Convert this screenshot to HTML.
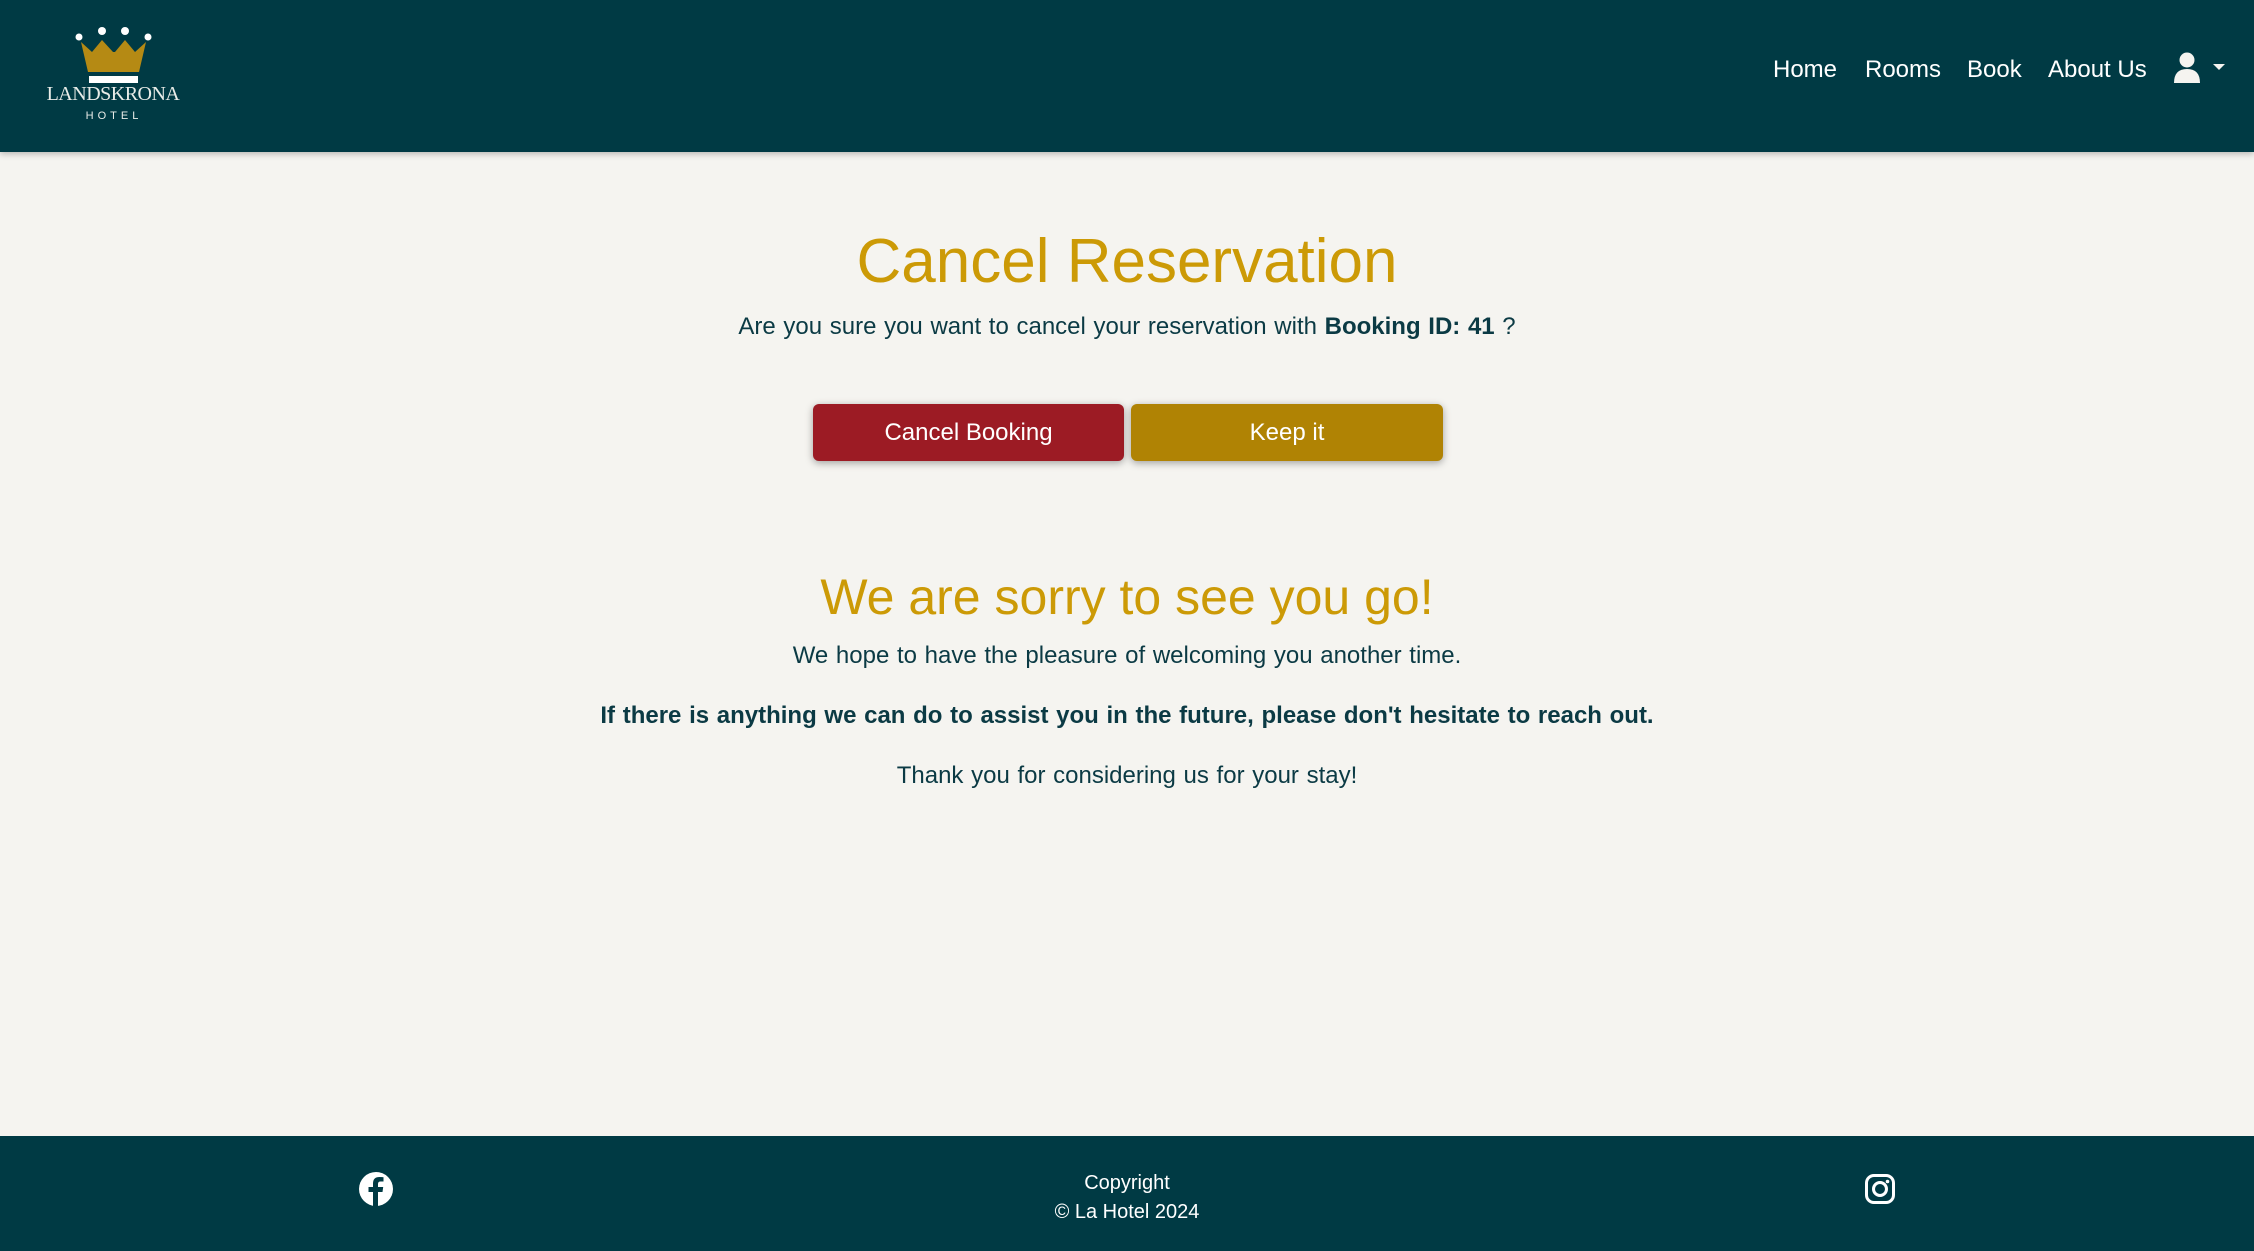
<!DOCTYPE html>
<html><head><meta charset="utf-8"><style>
*{margin:0;padding:0;box-sizing:border-box}
body{width:2254px;height:1251px;background:#f5f4f0;font-family:"Liberation Sans",sans-serif;position:relative;overflow:hidden;color:#0b3a44}
header{position:absolute;left:0;top:0;width:2254px;height:152px;background:#003a44;box-shadow:0 2px 6px rgba(0,0,0,.25)}
.nav{position:absolute;top:56px;font-size:24px;color:#fff}
.c{position:absolute;left:0;width:2254px;text-align:center}
.btn{position:absolute;top:404px;height:57px;border-radius:6px;color:#fff;font-size:24px;line-height:57px;text-align:center;box-shadow:0 2px 8px rgba(0,0,0,.35)}
footer{position:absolute;left:0;top:1136px;width:2254px;height:115px;background:#003a44;color:#fff}
</style></head><body>
<header>
<svg style="position:absolute;left:40px;top:22px" width="150" height="102" viewBox="0 0 150 102">
<circle cx="39" cy="15" r="3.5" fill="#fff"/><circle cx="62" cy="9" r="4" fill="#fff"/><circle cx="85" cy="9" r="4" fill="#fff"/><circle cx="108" cy="15" r="3.5" fill="#fff"/>
<path d="M41 20 L48 50 L99 50 L106 20 L95 30 L85 18 L75 30 L73 30 L62 18 L52 30 Z" fill="#b58a14"/>
<rect x="49" y="54" width="49" height="7" fill="#fff"/>
<text x="73" y="78" text-anchor="middle" font-family="Liberation Serif,serif" font-size="20" fill="#e8ece8" letter-spacing="-0.5">LANDSKRONA</text>
<text x="74" y="97" text-anchor="middle" font-family="Liberation Sans,sans-serif" font-size="11" fill="#e8ece8" letter-spacing="4">HOTEL</text>
</svg>
<span class="nav" style="left:1773px">Home</span>
<span class="nav" style="left:1865px">Rooms</span>
<span class="nav" style="left:1967px">Book</span>
<span class="nav" style="left:2048px">About Us</span>
<svg style="position:absolute;left:2174px;top:52px" width="56" height="32" viewBox="0 0 56 32">
<circle cx="13" cy="8" r="7.5" fill="#f5f4f0"/><path d="M0 31 Q0 17 13 17 Q26 17 26 31 Z" fill="#f5f4f0"/>
<path d="M39 12 L51 12 L45 18 Z" fill="#f5f4f0"/>
</svg>
</header>
<div class="c" style="top:226px;font-size:62px;color:#cc9a06">Cancel Reservation</div>
<div class="c" style="top:313px;font-size:24px;word-spacing:1px">Are you sure you want to cancel your reservation with <b>Booking ID: 41</b> ?</div>
<div class="btn" style="left:813px;width:311px;background:#9c1b24">Cancel Booking</div>
<div class="btn" style="left:1131px;width:312px;background:#b08304">Keep it</div>
<div class="c" style="top:568px;font-size:50px;color:#cc9a06">We are sorry to see you go!</div>
<div class="c" style="top:642px;font-size:24px;word-spacing:1px">We hope to have the pleasure of welcoming you another time.</div>
<div class="c" style="top:702px;font-size:24px;font-weight:bold;word-spacing:1px">If there is anything we can do to assist you in the future, please don't hesitate to reach out.</div>
<div class="c" style="top:762px;font-size:24px;word-spacing:1px">Thank you for considering us for your stay!</div>
<footer>
<svg style="position:absolute;left:359px;top:36px" width="34" height="34" viewBox="0 0 34 34">
<circle cx="17" cy="17" r="17" fill="#fff"/>
<path d="M19 34 V20 H23.5 L24.2 15 H19 V12 Q19 9.5 21.5 9.5 H24.5 V5.3 Q22.5 5 20.5 5 Q14 5 14 11.5 V15 H9.5 V20 H14 V34 Z" fill="#003a44"/>
</svg>
<div style="position:absolute;left:0;width:2254px;text-align:center;top:33px;font-size:20px;line-height:29px">Copyright<br>© La Hotel 2024</div>
<svg style="position:absolute;left:1864px;top:37px" width="32" height="32" viewBox="0 0 32 32">
<rect x="2.5" y="2.5" width="27" height="27" rx="7.5" fill="none" stroke="#fff" stroke-width="3"/>
<circle cx="16" cy="16" r="6.5" fill="none" stroke="#fff" stroke-width="3"/>
<circle cx="23.5" cy="8.5" r="1.8" fill="#fff"/>
</svg>
</footer>
</body></html>
